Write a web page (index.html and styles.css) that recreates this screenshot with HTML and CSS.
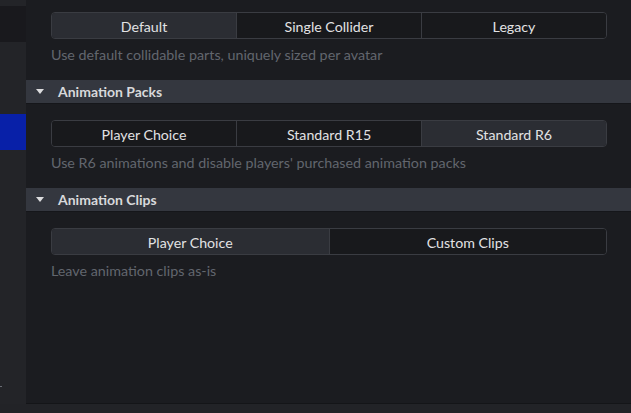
FILE: index.html
```html
<!DOCTYPE html>
<html>
<head>
<meta charset="utf-8">
<link rel="stylesheet" href="styles.css">
</head>
<body>
<div class="app">
  <aside class="sidebar">
    <div class="sb-top"></div>
    <div class="sb-dark"></div>
    <div class="sb-gap"></div>
    <div class="sb-active"></div>
    <div class="sb-rest"><span class="sb-mark"></span></div>
  </aside>
  <main class="main">
    <section class="section first">
      <div class="seg">
        <div class="opt on">Default</div>
        <div class="opt">Single Collider</div>
        <div class="opt">Legacy</div>
      </div>
      <p class="desc">Use default collidable parts, uniquely sized per avatar</p>
    </section>
    <div class="header"><span class="caret"></span><span class="htitle">Animation Packs</span></div>
    <section class="section">
      <div class="seg">
        <div class="opt">Player Choice</div>
        <div class="opt">Standard R15</div>
        <div class="opt on">Standard R6</div>
      </div>
      <p class="desc">Use R6 animations and disable players' purchased animation packs</p>
    </section>
    <div class="header"><span class="caret"></span><span class="htitle">Animation Clips</span></div>
    <section class="section">
      <div class="seg">
        <div class="opt on">Player Choice</div>
        <div class="opt">Custom Clips</div>
      </div>
      <p class="desc">Leave animation clips as-is</p>
    </section>
  </main>
</div>
<div class="footer"></div>
</body>
</html>
```
FILE: styles.css
```css
* { box-sizing: border-box; }
html, body { margin: 0; padding: 0; }
body {
  width: 631px;
  height: 413px;
  overflow: hidden;
  background: #222327;
  font-family: "Lato", "Noto Sans", sans-serif;
  font-size: 14px;
}
.app {
  display: flex;
  height: 404px;
}
.sidebar {
  width: 26px;
  display: flex;
  flex-direction: column;
  background: #232428;
}
.sb-top { height: 6px; }
.sb-dark { height: 36px; background: #19191d; }
.sb-gap { height: 72px; }
.sb-active { height: 36px; background: #0820a8; }
.sb-rest { flex: 1; position: relative; }
.sb-mark {
  position: absolute;
  left: 0;
  top: 236px;
  width: 2px;
  height: 1px;
  background: #6a6d75;
}
.main {
  flex: 1;
  background: #1b1c20;
  border-bottom: 1px solid #141518;
}
.section {
  padding: 16px 24px 0 25px;
}
.section.first { padding-top: 12px; }
.seg {
  display: flex;
  height: 27px;
  border: 1px solid #3a3c42;
  border-radius: 4px;
  overflow: hidden;
}
.opt {
  flex: 1;
  display: flex;
  align-items: center;
  justify-content: center;
  padding-top: 1px;
  font-size: 14.2px;
  color: #e2e2e4;
  background: #18191c;
  border-left: 1px solid #3a3c42;
}
.opt:first-child { border-left: none; }
.opt.on { background: #2b2d33; }
.desc {
  margin: 6px 0 15px;
  line-height: 20px;
  font-size: 14.3px;
  color: #62666e;
}
.header {
  height: 24px;
  background: #34373f;
  border-bottom: 1px solid #15161a;
  display: flex;
  align-items: center;
}
.caret {
  width: 0;
  height: 0;
  margin-left: 10px;
  border-left: 4px solid transparent;
  border-right: 4px solid transparent;
  border-top: 5px solid #dcdcde;
}
.htitle {
  margin-left: 14px;
  font-weight: bold;
  color: #d8d9db;
}
.footer {
  height: 9px;
  background: #222327;
}
```
